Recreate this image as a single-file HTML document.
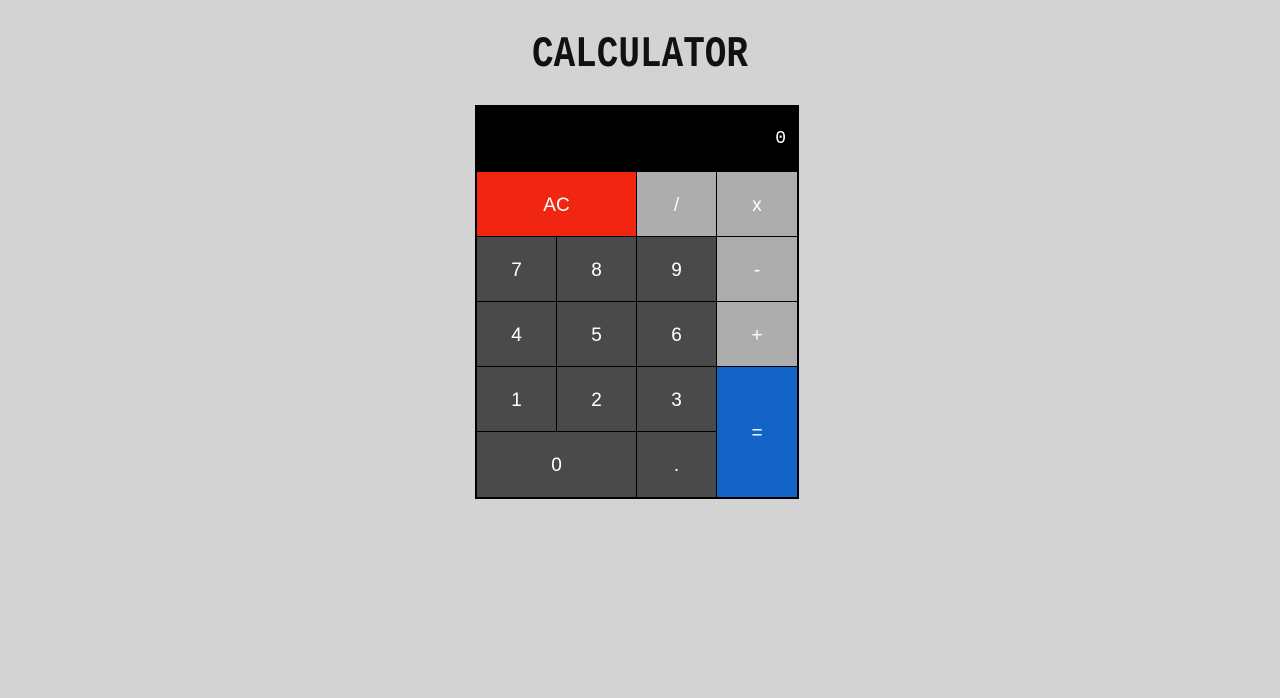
<!DOCTYPE html>
<html><head><style>
body{margin:0;background:#d3d3d3;width:1280px;height:698px;overflow:hidden;font-family:"Liberation Sans",sans-serif}
h1{position:absolute;left:0;width:1280px;top:31px;margin:0;text-align:center;font:bold 36px "Liberation Mono",monospace;color:#111;transform:scaleY(1.2);line-height:48px}
.calc{position:absolute;left:475px;top:105px;width:322px;height:392px;border:1px solid #000;background:#000}
.disp{position:absolute;left:0;top:0;width:322px;height:66px;background:#000;color:#fff;font:18px "Liberation Mono",monospace}
.disp span{position:absolute;right:12px;top:23px}
.b{position:absolute;box-sizing:border-box;border:1px solid #000;color:#fff;font-size:19px;display:flex;align-items:center;justify-content:center;background:#4a4a4a;padding-top:3px}
.g{background:#adadad}.r{background:#f02613}.bl{background:#1463c7}
</style></head><body>
<h1>CALCULATOR</h1>
<div class="calc">
<div class="disp"><span>0</span></div>
<div class="b r" style="left:0;top:65px;width:161px;height:66px">AC</div>
<div class="b g" style="left:160px;top:65px;width:81px;height:66px">/</div>
<div class="b g" style="left:240px;top:65px;width:82px;height:66px">x</div>
<div class="b" style="left:0;top:130px;width:81px;height:66px">7</div>
<div class="b" style="left:80px;top:130px;width:81px;height:66px">8</div>
<div class="b" style="left:160px;top:130px;width:81px;height:66px">9</div>
<div class="b g" style="left:240px;top:130px;width:82px;height:66px">-</div>
<div class="b" style="left:0;top:195px;width:81px;height:66px">4</div>
<div class="b" style="left:80px;top:195px;width:81px;height:66px">5</div>
<div class="b" style="left:160px;top:195px;width:81px;height:66px">6</div>
<div class="b g" style="left:240px;top:195px;width:82px;height:66px">+</div>
<div class="b" style="left:0;top:260px;width:81px;height:66px">1</div>
<div class="b" style="left:80px;top:260px;width:81px;height:66px">2</div>
<div class="b" style="left:160px;top:260px;width:81px;height:66px">3</div>
<div class="b bl" style="left:240px;top:260px;width:82px;height:132px">=</div>
<div class="b" style="left:0;top:325px;width:161px;height:67px">0</div>
<div class="b" style="left:160px;top:325px;width:81px;height:67px">.</div>
</div>
</body></html>
